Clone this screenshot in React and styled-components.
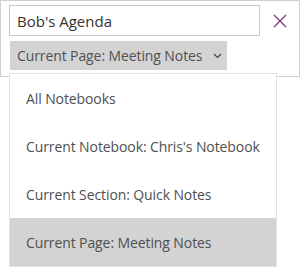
import React, { useState } from 'react';
import styled, { createGlobalStyle } from 'styled-components';

const scopes = [
    'All Notebooks',
    "Current Notebook: Chris's Notebook",
    'Current Section: Quick Notes',
    'Current Page: Meeting Notes',
];

const App = () => {
    const [scope, setScope] = useState(3);
    const [query, setQuery] = useState("Bob's Agenda");

    return (
        <Page>
            <GlobalStyle />
            <SearchPanel>
                <SearchRow>
                    <SearchInput value={query} onChange={(e) => setQuery(e.target.value)} />
                    <CloseButton aria-label="Close">
                        <svg width="14" height="14" viewBox="0 0 14 14">
                            <path d="M1 1 L13 13 M13 1 L1 13" stroke="#80397b" strokeWidth="1.3" fill="none" />
                        </svg>
                    </CloseButton>
                </SearchRow>
                <ScopeButton>
                    {scopes[scope]}
                    <Chevron width="9" height="6" viewBox="0 0 9 6">
                        <path d="M1 1 L4.5 4.5 L8 1" stroke="#444" strokeWidth="1.2" fill="none" />
                    </Chevron>
                </ScopeButton>
            </SearchPanel>
            <Menu>
                {scopes.map((label, i) => (
                    <MenuItem key={label} selected={i === scope} onClick={() => setScope(i)}>
                        {label}
                    </MenuItem>
                ))}
            </Menu>
        </Page>
    );
};

export default App;

const GlobalStyle = createGlobalStyle`
    body {
        margin:0;
        background:#ffffff;
        font-family:"Open Sans", "Noto Sans", sans-serif;
    }
`;

const Page = styled.div`
    position:relative;
    width:301px;
    height:267px;
    overflow:hidden;
`;

const SearchPanel = styled.div`
    width:300px;
    height:77px;
    box-sizing:border-box;
    border:1px solid #d0d0d0;
    padding:4px 0 0 8px;
    display:flex;
    flex-direction:column;
    gap:5px;
`;

const SearchRow = styled.div`
    display:flex;
    align-items:center;
`;

const SearchInput = styled.input`
    width:251px;
    height:31px;
    box-sizing:border-box;
    border:1px solid #c8c8c8;
    padding:0 0 0 7px;
    font-family:inherit;
    font-size:15px;
    color:#333333;
    outline:none;
`;

const CloseButton = styled.button`
    flex:1;
    height:31px;
    border:none;
    background:none;
    padding:0;
    display:flex;
    align-items:center;
    justify-content:center;
    cursor:pointer;
`;

const ScopeButton = styled.button`
    align-self:flex-start;
    margin-left:1px;
    width:217px;
    height:29px;
    border:none;
    background:#d3d3d3;
    padding:0 0 0 7px;
    display:flex;
    align-items:center;
    font-family:inherit;
    font-size:14px;
    letter-spacing:-0.1px;
    color:#505050;
    cursor:pointer;
`;

const Chevron = styled.svg`
    margin-left:auto;
    margin-right:5px;
`;

const Menu = styled.ul`
    position:absolute;
    left:9px;
    top:73px;
    width:268px;
    box-sizing:border-box;
    margin:0;
    padding:0;
    list-style:none;
    background:#ffffff;
    border:1px solid #e2e2e2;
`;

const MenuItem = styled.li`
    height:48px;
    display:flex;
    align-items:center;
    padding-left:16px;
    font-size:14px;
    letter-spacing:-0.1px;
    color:#505050;
    background:${(p) => (p.selected ? '#d3d3d3' : 'transparent')};
    cursor:pointer;
`;
